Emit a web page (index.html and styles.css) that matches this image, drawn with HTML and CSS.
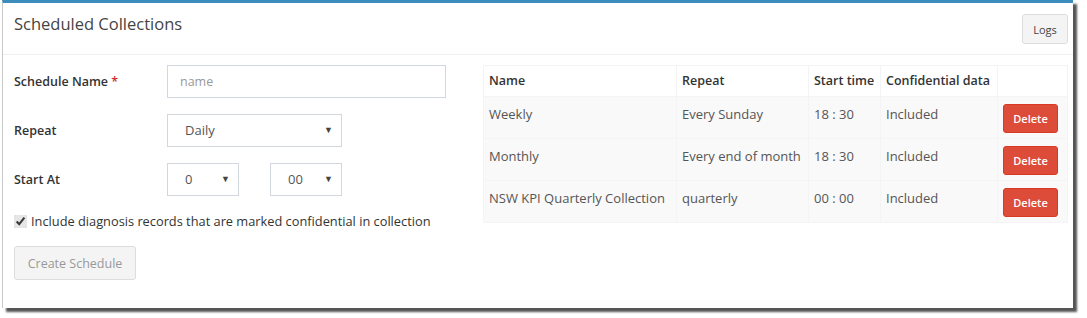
FILE: index.html
```html
<!DOCTYPE html>
<html lang="en">
<head>
    <meta charset="UTF-8">
    <title>Scheduled Collections</title>
    <link rel="stylesheet" href="styles.css">
</head>
<body>
    <div class="box">
        <div class="box-header">
            <h3 class="box-title">Scheduled Collections</h3>
            <button class="btn btn-default btn-logs">Logs</button>
        </div>
        <div class="box-body">
            <div class="form-col">
                <div class="form-row">
                    <label class="form-label">Schedule Name <span class="req">*</span></label>
                    <input class="form-input" type="text" placeholder="name">
                </div>
                <div class="form-row">
                    <label class="form-label">Repeat</label>
                    <div class="select select-wide">Daily<span class="caret">&#9660;</span></div>
                </div>
                <div class="form-row">
                    <label class="form-label">Start At</label>
                    <div class="time-pair">
                        <div class="select select-small">0<span class="caret">&#9660;</span></div>
                        <div class="select select-small">00<span class="caret">&#9660;</span></div>
                    </div>
                </div>
                <label class="check-row">
                    <input type="checkbox" checked>
                    Include diagnosis records that are marked confidential in collection
                </label>
                <button class="btn btn-default btn-create" disabled>Create Schedule</button>
            </div>
            <div class="table-col">
                <table class="schedule-table">
                    <thead>
                        <tr>
                            <th class="c-name">Name</th>
                            <th class="c-repeat">Repeat</th>
                            <th class="c-time">Start time</th>
                            <th class="c-conf">Confidential data</th>
                            <th class="c-act"></th>
                        </tr>
                    </thead>
                    <tbody>
                        <tr>
                            <td>Weekly</td>
                            <td>Every Sunday</td>
                            <td>18 : 30</td>
                            <td>Included</td>
                            <td class="act"><button class="btn btn-danger">Delete</button></td>
                        </tr>
                        <tr>
                            <td>Monthly</td>
                            <td>Every end of month</td>
                            <td>18 : 30</td>
                            <td>Included</td>
                            <td class="act"><button class="btn btn-danger">Delete</button></td>
                        </tr>
                        <tr>
                            <td>NSW KPI Quarterly Collection</td>
                            <td>quarterly</td>
                            <td>00 : 00</td>
                            <td>Included</td>
                            <td class="act"><button class="btn btn-danger">Delete</button></td>
                        </tr>
                    </tbody>
                </table>
            </div>
        </div>
    </div>
</body>
</html>
```

FILE: styles.css
```css
body {
    margin: 0;
    padding-bottom: 10px;
    background: #fff;
    font-family: "Open Sans", "Noto Sans", sans-serif;
    font-size: 13px;
    line-height: 1.42;
    color: #333;
}
.box {
    width: 1070px;
    height: 305px;
    margin-left: 2px;
    background: #fff;
    border-top: 3px solid #3c8dbc;
    border-left: 1px solid #c8c8c8;
    box-shadow: 4px 4px 2px #555;
}
.box-header {
    display: flex;
    justify-content: space-between;
    align-items: flex-start;
    height: 51px;
    padding: 0 5px 0 11px;
    border-bottom: 1px solid #f0f0f0;
}
.box-title {
    margin: 9px 0 0;
    font-size: 16.5px;
    font-weight: normal;
    color: #444;
}
.btn {
    font-family: inherit;
    font-size: 12px;
    border-radius: 3px;
    cursor: pointer;
}
.btn-default {
    background: #f4f4f4;
    border: 1px solid #ddd;
    color: #444;
}
.btn-logs {
    margin-top: 11px;
    width: 46px;
    height: 30px;
    font-size: 11px;
}
.box-body {
    display: flex;
    padding: 10px 5px 0 11px;
}
.form-col {
    width: 471px;
}
.form-row {
    display: flex;
    align-items: center;
    height: 33px;
    margin-bottom: 16px;
}
.form-label {
    width: 153px;
    font-size: 12.5px;
    font-weight: 600;
    color: #333;
}
.req {
    color: #c9302c;
}
.form-input {
    width: 279px;
    height: 33px;
    box-sizing: border-box;
    border: 1px solid #d2d6de;
    padding: 0 12px;
    font-family: inherit;
    font-size: 12.5px;
}
.form-input::placeholder {
    color: #999;
}
.select {
    display: flex;
    justify-content: space-between;
    align-items: center;
    box-sizing: border-box;
    height: 33px;
    border: 1px solid #d2d6de;
    padding: 0 8px 0 17px;
    color: #555;
}
.select-wide {
    width: 175px;
}
.select-small {
    width: 72px;
}
.time-pair {
    display: flex;
    gap: 31px;
}
.caret {
    font-size: 9px;
    color: #444;
}
.check-row {
    display: flex;
    align-items: center;
    gap: 4px;
    margin-top: 6px;
    font-size: 12.8px;
    color: #333;
}
.check-row input {
    margin: 0;
    width: 13px;
    height: 13px;
    accent-color: #e6e6e6;
}
.btn-create {
    margin-top: 16px;
    width: 122px;
    height: 34px;
    color: #999;
    font-size: 12.5px;
    cursor: default;
}
.table-col {
    flex: 1;
}
.schedule-table {
    width: 585px;
    border-collapse: collapse;
}
.schedule-table th,
.schedule-table td {
    border: 1px solid #f4f4f4;
    text-align: left;
    vertical-align: top;
}
.schedule-table th {
    padding: 6px 5px;
    font-size: 12.5px;
    font-weight: 600;
    color: #333;
    background: #fff;
}
.schedule-table td {
    padding: 8px 5px 6px;
    background: #f9f9f9;
    color: #555;
}
.schedule-table td.act {
    padding: 6px 5px 5px;
}
.c-name { width: 182px; }
.c-repeat { width: 121px; }
.c-time { width: 61px; }
.c-conf { width: 106px; }
.btn-danger {
    display: block;
    background: #dd4b39;
    border: 1px solid #d73925;
    color: #fff;
    width: 55px;
    height: 29px;
    font-size: 11px;
    font-weight: 600;
    margin-top: 1px;
}
```
